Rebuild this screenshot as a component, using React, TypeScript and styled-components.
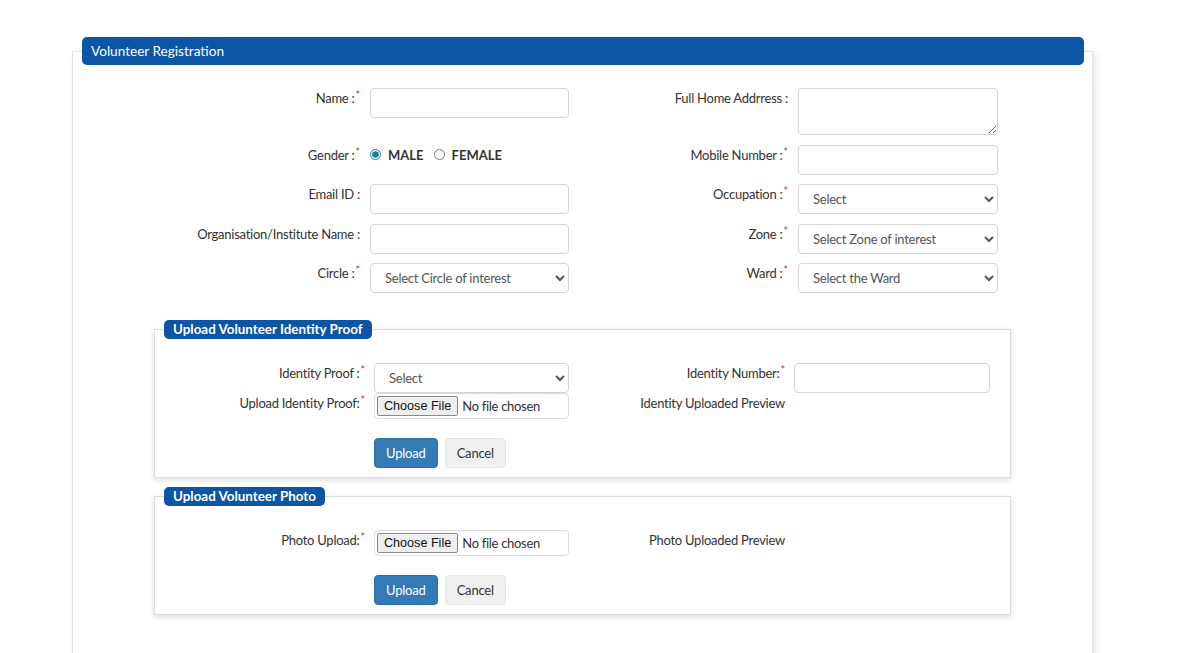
import React from "react";
import styled, { createGlobalStyle } from "styled-components";

const Global = createGlobalStyle`
  html, body { margin: 0; padding: 0; background: #fff; }
  body { font-family: Lato, "Open Sans", sans-serif; color: #333; font-size: 13px; }
  *, *::before, *::after { box-sizing: border-box; }
`;

const Panel = styled.fieldset`
  margin: 37px 0 0 72px;
  width: 1021px;
  min-width: 0;
  padding: 23px 9px 60px;
  border: 1px solid #e2e2e2;
  box-shadow: 3px 2px 8px rgba(0, 0, 0, 0.1);
`;

const PanelTitle = styled.legend`
  width: 1002px;
  height: 28px;
  margin: 0;
  padding: 0 9px;
  background: #0d55a5;
  color: #fff;
  border-radius: 5px;
  font-size: 13.6px;
  line-height: 28px;
`;

const MainGrid = styled.div`
  display: grid;
  grid-template-columns: 278px 199px 209px 200px;
  column-gap: 10px;
  row-gap: 9.5px;
  align-items: start;
`;

const Label = styled.label`
  display: block;
  text-align: right;
  font-size: 13px;
  letter-spacing: -0.25px;
  line-height: 20px;
  color: #333;
  white-space: nowrap;
`;

const Req = styled.span`
  color: #e0262b;
  font-size: 11px;
  vertical-align: top;
  line-height: 14px;
  margin-left: 1px;
`;

const TextInput = styled.input<{ $w?: number }>`
  display: block;
  width: ${(p) => p.$w ?? 199}px;
  height: 30px;
  margin: 0;
  padding: 0 10px;
  border: 1px solid #d6d6d6;
  border-radius: 4px;
  font-family: Lato, sans-serif;
  font-size: 13px;
  color: #555;
  background: #fff;
`;

const TextArea = styled.textarea`
  display: block;
  width: 200px;
  height: 47px;
  margin: 0;
  padding: 6px 10px;
  border: 1px solid #d6d6d6;
  border-radius: 4px;
  font-family: Lato, sans-serif;
  font-size: 13px;
`;

const Select = styled.select<{ $w?: number }>`
  display: block;
  width: ${(p) => p.$w ?? 199}px;
  height: 30px;
  margin: 0;
  padding: 0 8px 0 10px;
  border: 1px solid #d6d6d6;
  border-radius: 4px;
  font-family: Lato, sans-serif;
  font-size: 13px;
  letter-spacing: -0.25px;
  color: #555;
  background: #fff;
`;

const RadioGroup = styled.div`
  display: flex;
  align-items: center;
  height: 20px;
`;

const RadioOption = styled.label`
  display: flex;
  align-items: center;
  gap: 7px;
  margin-right: 10px;
  font-weight: 700;
  font-size: 13px;
  color: #333;
`;

const Radio = styled.input`
  margin: 0;
  width: 11px;
  height: 11px;
  accent-color: #1f7d9a;
`;

const Section = styled.fieldset<{ $top: number }>`
  margin: ${(p) => p.$top}px 0 0 72px;
  width: 857px;
  min-width: 0;
  padding: 24px 9px 9px;
  border: 1px solid #dcdcdc;
  box-shadow: 0 2px 6px rgba(0, 0, 0, 0.14);
`;

const SectionTitle = styled.legend`
  margin: 0;
  padding: 0 9px;
  height: 19px;
  line-height: 19px;
  background: #0d55a5;
  color: #fff;
  border-radius: 5px;
  font-size: 13.4px;
  font-weight: 700;
`;

const SectionGrid = styled.div`
  display: grid;
  grid-template-columns: 201px 195px 207px 196px;
  column-gap: 9px;
  align-items: start;
`;

const FileField = styled.label`
  display: flex;
  align-items: center;
  width: 195px;
  height: 26px;
  padding: 0 2px;
  border: 1px solid #dcdcdc;
  border-radius: 4px;
  background: #fff;
  cursor: pointer;
`;

const FileButton = styled.span`
  display: inline-block;
  height: 20px;
  padding: 0 6px;
  margin-right: 4px;
  border: 1px solid #8a8a8a;
  border-radius: 2px;
  background: #efefef;
  font-family: "Liberation Sans", Arial, sans-serif;
  font-size: 12.6px;
  line-height: 18px;
  color: #111;
`;

const FileText = styled.span`
  font-size: 13px;
  letter-spacing: -0.3px;
  color: #333;
`;

const Actions = styled.div`
  grid-column: 2 / span 3;
  display: flex;
  gap: 7px;
  margin-top: 19px;
`;

const Button = styled.button<{ $primary?: boolean }>`
  height: 30px;
  padding: 0 11px;
  border-radius: 4px;
  font-family: Lato, sans-serif;
  font-size: 13px;
  letter-spacing: -0.2px;
  cursor: pointer;
  border: 1px solid ${(p) => (p.$primary ? "#2e6da4" : "#e4e4e4")};
  background: ${(p) => (p.$primary ? "#337ab7" : "#f0f0f0")};
  color: ${(p) => (p.$primary ? "#fff" : "#333")};
`;

const Spacer = styled.div``;

function Field({ text, req }: { text: string; req?: boolean }) {
  return (
    <Label>
      {text}
      {req && <Req>*</Req>}
    </Label>
  );
}

function FileInput() {
  return (
    <FileField>
      <FileButton>Choose File</FileButton>
      <FileText>No file chosen</FileText>
    </FileField>
  );
}

export default function App() {
  return (
    <>
      <Global />
      <Panel>
        <PanelTitle>Volunteer Registration</PanelTitle>
        <MainGrid>
          <Field text="Name :" req />
          <TextInput type="text" />
          <Field text="Full Home Addrress :" />
          <TextArea />

          <Field text="Gender :" req />
          <RadioGroup>
            <RadioOption>
              <Radio type="radio" name="gender" defaultChecked />
              MALE
            </RadioOption>
            <RadioOption>
              <Radio type="radio" name="gender" />
              FEMALE
            </RadioOption>
          </RadioGroup>
          <Field text="Mobile Number :" req />
          <TextInput type="text" $w={200} />

          <Field text="Email ID :" />
          <TextInput type="text" />
          <Field text="Occupation :" req />
          <Select $w={200} defaultValue="">
            <option value="">Select</option>
          </Select>

          <Field text="Organisation/Institute Name :" />
          <TextInput type="text" />
          <Field text="Zone :" req />
          <Select $w={200} defaultValue="">
            <option value="">Select Zone of interest</option>
          </Select>

          <Field text="Circle :" req />
          <Select defaultValue="">
            <option value="">Select Circle of interest</option>
          </Select>
          <Field text="Ward :" req />
          <Select $w={200} defaultValue="">
            <option value="">Select the Ward</option>
          </Select>
        </MainGrid>

        <Section $top={27}>
          <SectionTitle>Upload Volunteer Identity Proof</SectionTitle>
          <SectionGrid>
            <Field text="Identity Proof :" req />
            <Select $w={195} defaultValue="">
              <option value="">Select</option>
            </Select>
            <Field text="Identity Number:" req />
            <TextInput type="text" $w={196} />

            <Field text="Upload Identity Proof:" req />
            <FileInput />
            <Field text="Identity Uploaded Preview" />
            <Spacer />

            <Actions>
              <Button $primary>Upload</Button>
              <Button>Cancel</Button>
            </Actions>
          </SectionGrid>
        </Section>

        <Section $top={9}>
          <SectionTitle>Upload Volunteer Photo</SectionTitle>
          <SectionGrid>
            <Field text="Photo Upload:" req />
            <FileInput />
            <Field text="Photo Uploaded Preview" />
            <Spacer />

            <Actions>
              <Button $primary>Upload</Button>
              <Button>Cancel</Button>
            </Actions>
          </SectionGrid>
        </Section>
      </Panel>
    </>
  );
}
